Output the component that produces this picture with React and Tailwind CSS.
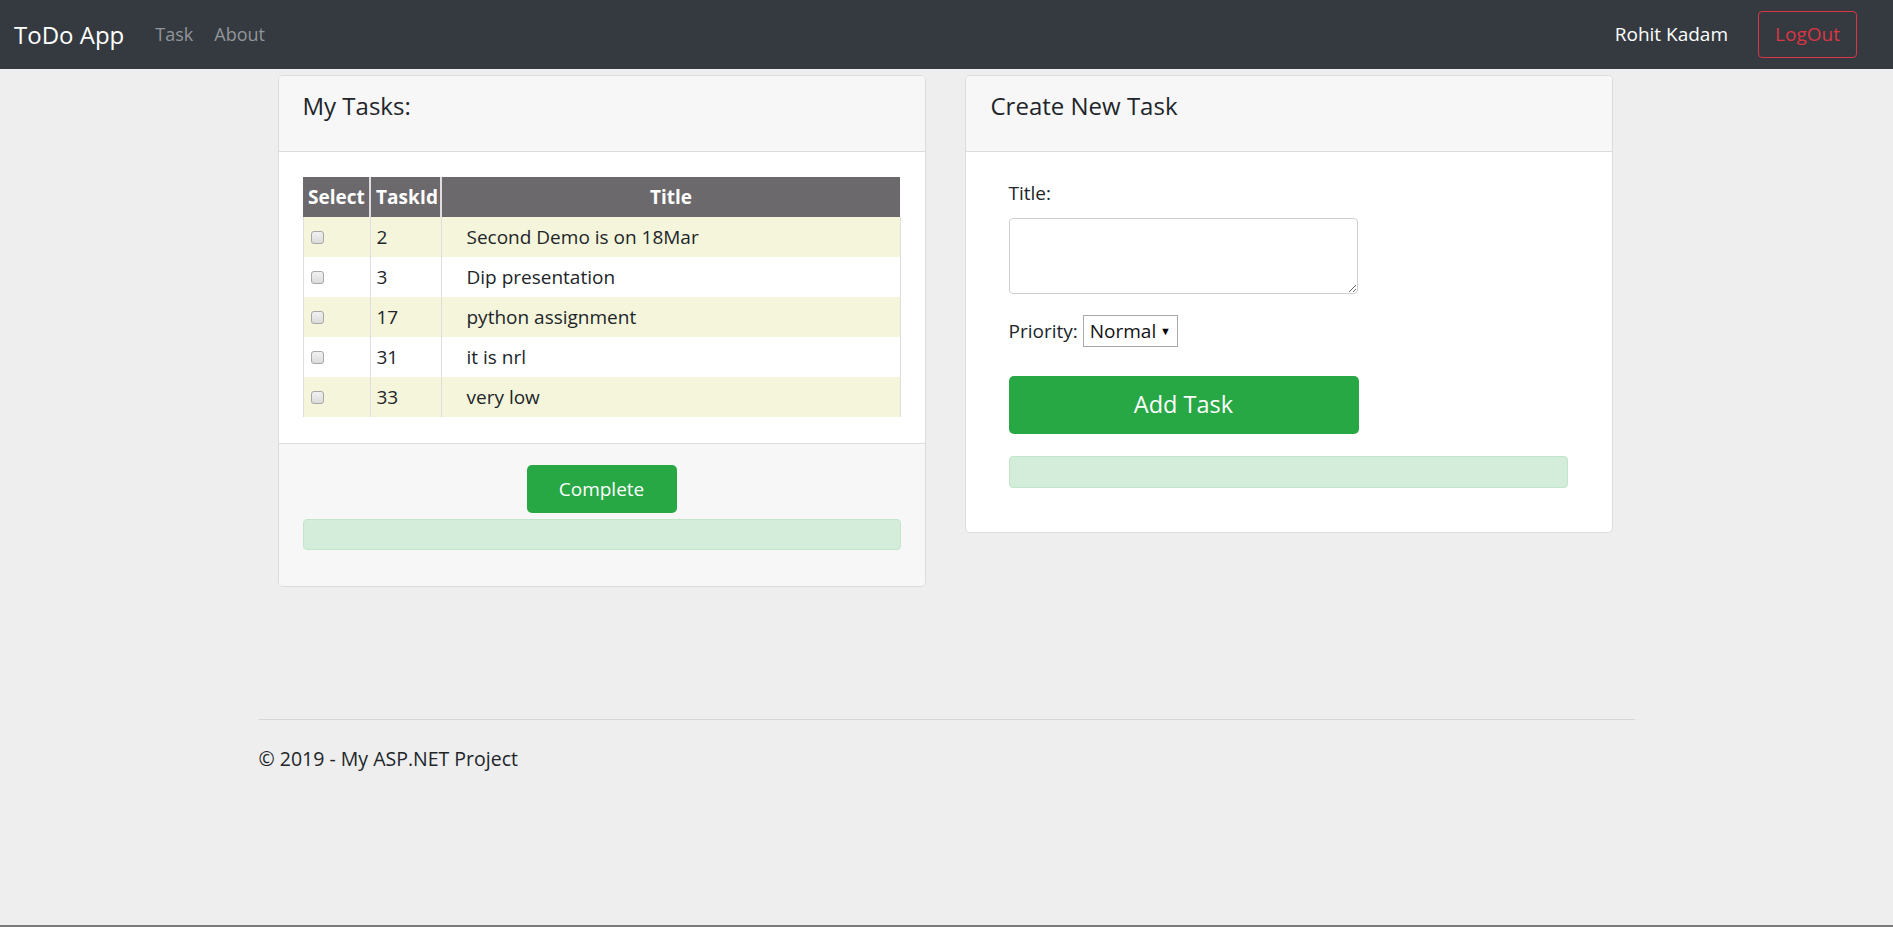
import React from "react";

const font = { fontFamily: '"Open Sans", "Noto Sans", sans-serif' };

const tasks = [
   { id: 2, title: "Second Demo is on 18Mar" },
   { id: 3, title: "Dip presentation" },
   { id: 17, title: "python assignment" },
   { id: 31, title: "it is nrl" },
   { id: 33, title: "very low" }
];

function Checkbox() {
   return (
      <div className="w-[13px] h-[13px] rounded-[3px] border border-[#a8a8a8] bg-gradient-to-b from-[#f0f0f0] to-[#dcdcdc]" />
   );
}

function Navbar() {
   return (
      <nav className="h-[69px] bg-[#343a40] flex items-center pl-[14px]">
         <span className="text-[24px] text-white leading-none">ToDo App</span>
         <div className="flex items-center gap-[21px] ml-[31px] text-[18px] text-[#92959a]">
            <span>Task</span>
            <span>About</span>
         </div>
         <div className="ml-auto flex items-center">
            <span className="text-[19px] text-white">Rohit Kadam</span>
            <button className="ml-[30px] mr-[36px] w-[99px] h-[47px] border border-[#dc3545] rounded-[4px] text-[#dc3545] text-[19px]">
               LogOut
            </button>
         </div>
      </nav>
   );
}

function TasksCard() {
   return (
      <div className="w-[648px] h-[512px] bg-white border border-[#dcdcdc] rounded-[5px] flex flex-col overflow-hidden">
         <div className="h-[76px] shrink-0 bg-[#f7f7f7] border-b border-[#dcdcdc] px-[24px] pt-[15px]">
            <h4 className="text-[24px] leading-[29px] text-[#212529]">My Tasks:</h4>
         </div>
         <div className="h-[291px] shrink-0 px-[24px] pt-[25px]">
            <table className="w-[598px] border-collapse text-[19px] text-[#212529]">
               <thead>
                  <tr className="h-[40px] bg-[#6b696b] text-white">
                     <th className="w-[67px] text-left pl-[5px] font-bold border-r-2 border-[#dedede]">Select</th>
                     <th className="w-[71px] text-left pl-[5px] font-bold border-r-2 border-[#dedede]">TaskId</th>
                     <th className="text-center font-bold">Title</th>
                  </tr>
               </thead>
               <tbody>
                  {tasks.map((t, i) => (
                     <tr
                        key={t.id}
                        className={`h-[40px] ${i % 2 === 0 ? "bg-[#f5f5dc]" : "bg-white"}`}
                     >
                        <td className="pl-[7px] border-l border-r border-[#dedede]">
                           <Checkbox />
                        </td>
                        <td className="pl-[6px] border-r border-[#dedede]">{t.id}</td>
                        <td className="pl-[25px] border-r border-[#dedede]">{t.title}</td>
                     </tr>
                  ))}
               </tbody>
            </table>
         </div>
         <div className="flex-1 bg-[#f7f7f7] border-t border-[#dcdcdc] px-[24px] pt-[21px] flex flex-col items-center">
            <button className="w-[150px] h-[48px] bg-[#28a745] text-white text-[19px] rounded-[5px]">
               Complete
            </button>
            <div className="mt-[6px] w-full h-[31px] bg-[#d4edda] border border-[#c3e6cb] rounded-[4px]" />
         </div>
      </div>
   );
}

function CreateCard() {
   return (
      <div className="w-[648px] h-[458px] bg-white border border-[#dcdcdc] rounded-[5px] flex flex-col overflow-hidden">
         <div className="h-[76px] shrink-0 bg-[#f7f7f7] border-b border-[#dcdcdc] px-[25px] pt-[15px]">
            <h4 className="text-[24px] leading-[29px] text-[#212529]">Create New Task</h4>
         </div>
         <div className="px-[43px] pt-[28px] flex flex-col text-[19px] text-[#212529]">
            <label className="leading-[26px]">Title:</label>
            <textarea className="mt-[12px] w-[349px] h-[76px] border border-[#cfcfcf] rounded-[4px] bg-white outline-none" />
            <div className="mt-[21px] flex items-center">
               <span>Priority:</span>
               <div className="ml-[5px] h-[32px] w-[95px] border border-[#a9a9a9] flex items-center px-[6px]">
                  <span className="text-[#111]">Normal</span>
                  <span className="ml-auto text-[11px] text-black">▼</span>
               </div>
            </div>
            <button className="mt-[29px] w-[350px] h-[58px] bg-[#28a745] text-white text-[23.5px] rounded-[5px]">
               Add Task
            </button>
            <div className="mt-[22px] w-[559px] h-[32px] bg-[#d4edda] border border-[#c3e6cb] rounded-[4px]" />
         </div>
      </div>
   );
}

export default function App() {
   return (
      <div
         className="h-[927px] bg-[#eeeeee] flex flex-col border-b-2 border-[#7a7a7a]"
         style={font}
      >
         <Navbar />
         <main className="w-[1376px] mx-auto">
            <div className="flex items-start gap-[39px] px-[19px] pt-[6px]">
               <TasksCard />
               <CreateCard />
            </div>
            <footer className="mt-[132px]">
               <hr className="border-t border-[#d6d6d6]" />
               <p className="mt-[24px] text-[19.5px] text-[#212529]">© 2019 - My ASP.NET Project</p>
            </footer>
         </main>
      </div>
   );
}
